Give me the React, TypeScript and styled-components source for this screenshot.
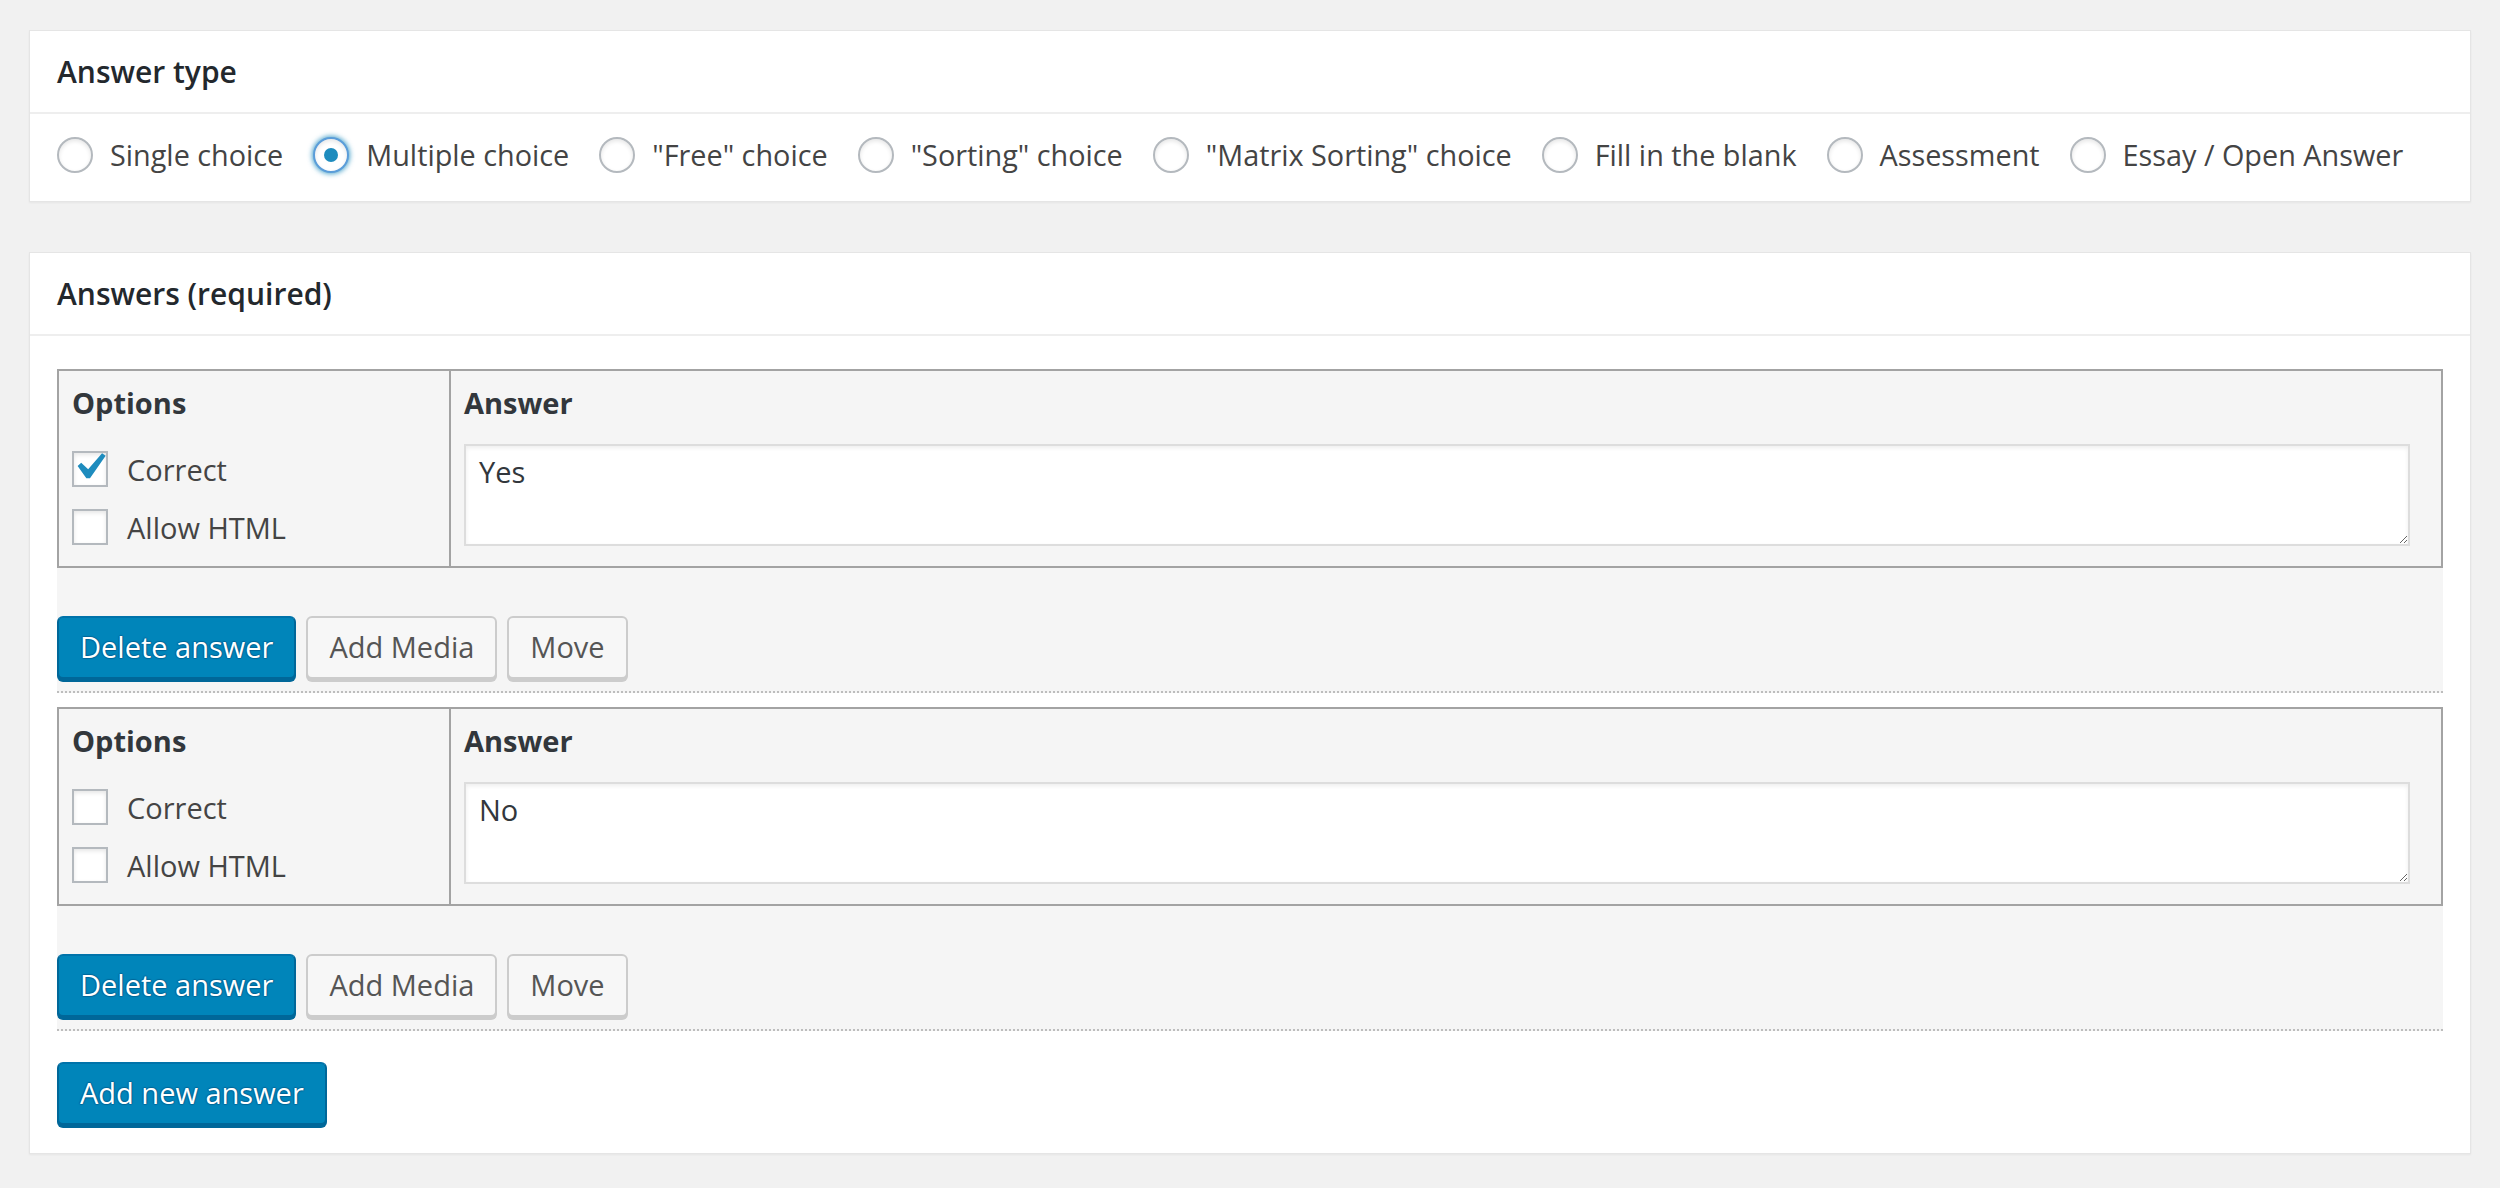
import React from "react";
import styled, { createGlobalStyle } from "styled-components";

const GlobalStyle = createGlobalStyle`
  html, body {
    margin: 0;
    padding: 0;
  }
  body {
    background: #f1f1f1;
    font-family: "Open Sans", "Noto Sans", sans-serif;
    color: #444;
  }
  * {
    box-sizing: border-box;
  }
`;

const Page = styled.div`
  display: flex;
  flex-direction: column;
  gap: 50px;
  padding: 30px 29px;
`;

const Postbox = styled.section`
  background: #fff;
  border: 1px solid #e5e5e5;
  box-shadow: 0 1px 2px rgba(0, 0, 0, 0.05);
`;

const Hndle = styled.h2`
  margin: 0;
  height: 83px;
  padding: 0 27px;
  display: flex;
  align-items: center;
  border-bottom: 2px solid #eee;
  font-size: 30px;
  font-weight: 600;
  color: #23282d;
`;

const RadioRow = styled.div`
  height: 87px;
  padding: 0 27px 5px;
  display: flex;
  align-items: center;
  gap: 30px;
`;

const Choice = styled.label`
  display: flex;
  align-items: center;
  gap: 17px;
  font-size: 28.8px;
  line-height: 1.4;
  color: #444;
  white-space: nowrap;
`;

const RadioDot = styled.span<{ $checked?: boolean; $focus?: boolean }>`
  width: 36px;
  height: 36px;
  flex: none;
  border-radius: 50%;
  background: #fff;
  border: 2px solid ${(p) => (p.$focus ? "#5b9dd9" : "#b4b9be")};
  box-shadow: ${(p) =>
    p.$focus
      ? "0 0 5px 1px rgba(30, 140, 190, 0.8), inset 0 2px 4px rgba(0, 0, 0, 0.1)"
      : "inset 0 2px 4px rgba(0, 0, 0, 0.1)"};
  display: flex;
  align-items: center;
  justify-content: center;

  &::before {
    content: "";
    display: ${(p) => (p.$checked ? "block" : "none")};
    width: 14px;
    height: 14px;
    border-radius: 50%;
    background: #1e8cbe;
  }
`;

const PostboxInside = styled.div`
  padding: 33px 27px 28px;
`;

const AnswerBlock = styled.div`
  background: #f5f5f5;
  border-bottom: 2px dotted #bdbdbd;
  margin-bottom: 14px;
`;

const AnswerTable = styled.div`
  display: grid;
  grid-template-columns: 392px 1fr;
  border: 2px solid #a3a3a3;
  background: #f5f5f5;
`;

const OptionsCell = styled.div`
  border-right: 2px solid #a3a3a3;
  padding: 12px 13px 10px;
`;

const AnswerCell = styled.div`
  padding: 12px 31px 20px 13px;
`;

const CellTitle = styled.div`
  font-size: 29px;
  line-height: 40px;
  font-weight: 700;
  color: #32373c;
`;

const OptionList = styled.div`
  margin-top: 17px;
  display: flex;
  flex-direction: column;
`;

const OptionLine = styled.label`
  height: 58px;
  display: flex;
  align-items: center;
  gap: 19px;
  font-size: 29px;
  color: #444;
`;

const Box = styled.span`
  position: relative;
  width: 36px;
  height: 36px;
  flex: none;
  background: #fff;
  border: 2px solid #b4b9be;
  box-shadow: inset 0 2px 4px rgba(0, 0, 0, 0.1);
`;

const Tick = styled.svg`
  position: absolute;
  left: -12px;
  top: -13px;
  width: 54px;
  height: 54px;
  fill: #1e8cbe;
`;

const AnswerText = styled.textarea`
  display: block;
  width: 100%;
  height: 102px;
  margin-top: 21px;
  padding: 6px 13px;
  border: 2px solid #ddd;
  box-shadow: inset 0 2px 4px rgba(0, 0, 0, 0.07);
  background: #fff;
  font-family: inherit;
  font-size: 29px;
  line-height: 1.4;
  color: #32373c;
  resize: vertical;
  outline: none;
`;

const ButtonRow = styled.div`
  display: flex;
  gap: 10px;
  padding: 48px 0 12px;
`;

const Button = styled.button<{ $primary?: boolean }>`
  height: 63px;
  padding: 0 21px 2px;
  border-radius: 6px;
  border: 2px solid;
  font-family: inherit;
  font-size: 29px;
  line-height: 1;
  cursor: pointer;
  background: ${(p) => (p.$primary ? "#0085ba" : "#f7f7f7")};
  border-color: ${(p) =>
    p.$primary ? "#0073aa #006799 #006799" : "#cccccc"};
  box-shadow: 0 3px 0 ${(p) => (p.$primary ? "#006799" : "#cccccc")};
  color: ${(p) => (p.$primary ? "#fff" : "#555")};
  text-shadow: ${(p) =>
    p.$primary
      ? "0 -1px 1px #006799, 1px 0 1px #006799, 0 1px 1px #006799, -1px 0 1px #006799"
      : "none"};
`;

const AddRow = styled.div`
  padding-top: 17px;
`;

const answerTypes = [
  "Single choice",
  "Multiple choice",
  '"Free" choice',
  '"Sorting" choice',
  '"Matrix Sorting" choice',
  "Fill in the blank",
  "Assessment",
  "Essay / Open Answer",
];

const answers = [
  { text: "Yes", correct: true },
  { text: "No", correct: false },
];

function Checkbox({ checked }: { checked?: boolean }) {
  return (
    <Box>
      {checked && (
        <Tick viewBox="0 0 20 20">
          <path d="M14.83 4.89l1.34.94-5.81 8.38H9.02L5.78 9.67l1.34-1.25 2.57 2.4z" />
        </Tick>
      )}
    </Box>
  );
}

export default function App() {
  return (
    <>
      <GlobalStyle />
      <Page>
        <Postbox>
          <Hndle>Answer type</Hndle>
          <RadioRow>
            {answerTypes.map((t, i) => (
              <Choice key={t}>
                <RadioDot $checked={i === 1} $focus={i === 1} />
                {t}
              </Choice>
            ))}
          </RadioRow>
        </Postbox>

        <Postbox>
          <Hndle>Answers (required)</Hndle>
          <PostboxInside>
            {answers.map((a) => (
              <AnswerBlock key={a.text}>
                <AnswerTable>
                  <OptionsCell>
                    <CellTitle>Options</CellTitle>
                    <OptionList>
                      <OptionLine>
                        <Checkbox checked={a.correct} />
                        Correct
                      </OptionLine>
                      <OptionLine>
                        <Checkbox />
                        Allow HTML
                      </OptionLine>
                    </OptionList>
                  </OptionsCell>
                  <AnswerCell>
                    <CellTitle>Answer</CellTitle>
                    <AnswerText defaultValue={a.text} />
                  </AnswerCell>
                </AnswerTable>
                <ButtonRow>
                  <Button $primary>Delete answer</Button>
                  <Button>Add Media</Button>
                  <Button>Move</Button>
                </ButtonRow>
              </AnswerBlock>
            ))}
            <AddRow>
              <Button $primary>Add new answer</Button>
            </AddRow>
          </PostboxInside>
        </Postbox>
      </Page>
    </>
  );
}
